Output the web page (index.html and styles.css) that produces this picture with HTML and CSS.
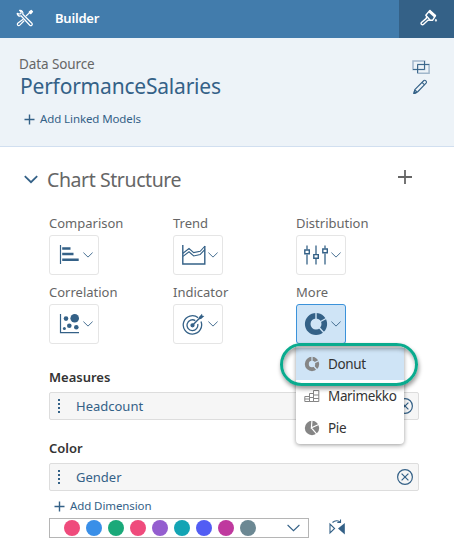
FILE: index.html
```html
<!DOCTYPE html>
<html lang="en">
<head>
<meta charset="utf-8">
<title>Builder</title>
<link rel="stylesheet" href="styles.css">
</head>
<body>
<header class="bar">
  <svg class="tools" width="18" height="18" viewBox="0 0 18 18" fill="none" stroke="#fff" stroke-width="1.25" stroke-linejoin="round"><path d="M1.2 4.4c.1 2 2 3.2 3.8 2.4l8.8 9.4c1.4 1.2 3.3-.5 2.1-2L6.8 5.3C7.5 3 5.8 1 3.6 1.3l1.6 1.8-.4 1.5-1.5.4z"/><path d="M7.2 10.2 2 14.1c-1.6 1.3.2 3.5 1.8 2l4.3-4.4M10 7l4.2-3.9"/><path d="m13.2 3.1 2-1.7 1.3 1.3-1.7 2z" fill="#fff"/></svg>
  <span class="title">Builder</span>
  <div class="tab"><svg width="18" height="18" viewBox="0 0 18 18" fill="none" stroke="#fff" stroke-width="1.4" stroke-linejoin="round"><path d="M5.8 6.2 9.9 1.4l5.6 5.2-2.8 4.6H10.2z"/><path d="m9.3 2.2 5.9 5.3" stroke-width="2.6"/><path d="m6.6 7.4-.3 2-4.6 3.9c-1.5 1.4.4 3.5 1.9 2l4.3-4 2.3-.2"/><path d="M15.9 10.2c2 2.8-1.8 2.8 0 0z" fill="#fff" stroke-width=".8"/></svg></div>
</header>
<section class="source">
  <div class="source-text">
    <div class="label ds"><span>Data Source</span></div>
    <div class="model">PerformanceSalaries</div>
    <div class="add add-model"><svg width="11" height="11" viewBox="0 0 11 11"><path d="M5.5.5v10M.5 5.5h10"/></svg><span>Add Linked Models</span></div>
  </div>
  <div class="source-icons">
    <svg width="18" height="14" viewBox="0 0 18 14" fill="none" stroke="#346187"><path d="M1 .9h11.6v8.6H1zM5.8 4.5h11.3v8.7H5.8z" stroke="#a1b7cb" stroke-width="1.5"/><path d="M1 9.5h11.5V1M5.5 13V4.5h11.7" stroke-width=".9"/></svg>
    <svg class="pencil" width="16" height="16" viewBox="0 0 16 16" fill="none" stroke="#346187" stroke-width="1.1" stroke-linejoin="round"><path d="m1.9 14.5.9-3.8L11.9 1.5q1-.6 2 .4t.4 2L5.5 13z"/><path d="m10 3.3 2.6 2.6M2.9 10.8l2.4 2.3"/><path d="m1.9 14.5.5-2.3 1.7 1.7z" fill="#346187"/></svg>
  </div>
</section>
<main>
  <div class="head">
    <svg class="chev" width="14" height="9" viewBox="0 0 14 9"><path d="m.8 1.2 6.2 6 6.2-6"/></svg>
    <h1>Chart Structure</h1>
    <svg class="plus" width="14" height="14" viewBox="0 0 14 14"><path d="M7 0v14M0 7h14"/></svg>
  </div>
  <div class="types">
    <div class="type"><div class="label">Comparison</div><div class="button">
      <svg width="22" height="22" viewBox="0 0 22 22" stroke="#346187" fill="none"><path d="M2.5 1v19" stroke-width="1.2"/><path d="M4.2 4.5h8.3M4.2 10h11.3M4.2 15.8h16.5" stroke-width="2.4"/></svg>
      <svg class="arrow" width="10" height="6" viewBox="0 0 10 6"><path d="m.4.6 4.6 4.5L9.6.6"/></svg></div></div>
    <div class="type"><div class="label">Trend</div><div class="button wide">
      <svg width="24" height="20" viewBox="0 0 24 20" stroke="#346187" fill="none"><path d="M.8 0v19h22V1" stroke-width="1.4"/><path d="m1 8.2 6-4.7 4.7 4.1 6.5-1.3L23 1M1 11.4l6-4.6 4.7 4.2 6.5-1.5L23 4.4" stroke-width="1.1"/></svg>
      <svg class="arrow" width="10" height="6" viewBox="0 0 10 6"><path d="m.4.6 4.6 4.5L9.6.6"/></svg></div></div>
    <div class="type"><div class="label">Distribution</div><div class="button wide shifted">
      <svg width="24" height="20" viewBox="0 0 24 20" stroke="#346187" fill="none" stroke-width="1.3"><path d="M3 .5v4M3 9.5v10M12 .5v8.7M12 14v5.5M21 .5v3M21 8.6v11" stroke="#5d819f" stroke-width="1.6"/><path d="M.8 5h4.5v3.7H.8zM9.8 9.6h4.5v3.6H9.8zM18.8 4h4.5v3.7h-4.5z" stroke-width="1.4"/></svg>
      <svg class="arrow" width="10" height="6" viewBox="0 0 10 6"><path d="m.4.6 4.6 4.5L9.6.6"/></svg></div></div>
    <div class="type"><div class="label">Correlation</div><div class="button">
      <svg width="22" height="22" viewBox="0 0 22 22" fill="#346187"><path d="M2.5 1v18.6h18.5" fill="none" stroke="#346187" stroke-width="1.2"/><circle cx="8" cy="5.6" r="2.3"/><circle cx="16.7" cy="5.2" r="4.3"/><circle cx="11.3" cy="12.8" r="2.3"/><circle cx="18.3" cy="14.3" r="2.3"/><circle cx="6.4" cy="15.6" r="1.5"/></svg>
      <svg class="arrow" width="10" height="6" viewBox="0 0 10 6"><path d="m.4.6 4.6 4.5L9.6.6"/></svg></div></div>
    <div class="type"><div class="label">Indicator</div><div class="button wide">
      <svg width="24" height="24" viewBox="0 0 24 24" fill="none" stroke="#346187" stroke-width="1.3"><path d="M16.2 5.7A9.2 9.2 0 1 0 19 9.5M13.3 8.6A5.4 5.4 0 1 0 15.7 12"/><path d="m10.5 13.3 8-8" stroke-width="1.5"/><circle cx="10.5" cy="13.3" r="1.5" fill="#346187"/><path d="m17 5.1 3-3.3.4 1.9 2 .3-3.3 3-2.1.2z" fill="#346187" stroke="none"/></svg>
      <svg class="arrow" width="10" height="6" viewBox="0 0 10 6"><path d="m.4.6 4.6 4.5L9.6.6"/></svg></div></div>
    <div class="type"><div class="label">More</div><div class="button wide shifted selected">
      <svg width="24" height="24" viewBox="0 0 24 24"><circle cx="12" cy="12" r="8.3" fill="none" stroke="#346187" stroke-width="5.6"/><path d="M12 12V0M12 12l11-6M12 12l9 10" stroke="#cfe4f6" stroke-width="1.4"/></svg>
      <svg class="arrow" width="10" height="6" viewBox="0 0 10 6"><path d="m.4.6 4.6 4.5L9.6.6"/></svg></div>
      <div class="menu">
        <div class="item active"><svg width="16" height="16" viewBox="0 0 16 16"><circle cx="8" cy="8" r="5.2" fill="none" stroke="#858585" stroke-width="4"/><path d="M8 8V0M8 8l8-4M8 8l6 7" stroke="#cfe4f6" stroke-width="1.2"/></svg><span>Donut</span></div>
        <div class="item"><svg width="16" height="16" viewBox="0 0 16 16" fill="none" stroke="#858585"><path d="M.8 8.5h4.7v5H.8zM.8 11h4.7M5.5 5.5h4v8h-4zM5.5 9.5h4M9.5 2.5h5.3v11H9.5zM9.5 7h5.3M9.5 10.5h5.3"/></svg><span>Marimekko</span></div>
        <div class="item"><svg width="16" height="16" viewBox="0 0 16 16"><circle cx="8" cy="8" r="7.2" fill="#858585"/><path d="m8 0-.6 7.8L15.8 4M7.4 7.8l5.8 6.8" fill="none" stroke="#fff" stroke-width="1.2"/></svg><span>Pie</span></div>
      </div>
      <div class="ring"></div>
    </div>
  </div>
  <h2 class="measures">Measures</h2>
  <div class="field"><svg width="4" height="16" viewBox="0 0 4 16"><path d="M2 1v15" stroke="#346187" stroke-width="2" stroke-dasharray="2"/></svg><span>Headcount</span>
    <svg class="close" width="16" height="16" viewBox="0 0 16 16"><circle cx="8" cy="8" r="7.4"/><path d="m4.6 4.6 6.8 6.8m0-6.8-6.8 6.8"/></svg></div>
  <h2 class="color">Color</h2>
  <div class="field"><svg width="4" height="16" viewBox="0 0 4 16"><path d="M2 1v15" stroke="#346187" stroke-width="2" stroke-dasharray="2"/></svg><span>Gender</span>
    <svg class="close" width="16" height="16" viewBox="0 0 16 16"><circle cx="8" cy="8" r="7.4"/><path d="m4.6 4.6 6.8 6.8m0-6.8-6.8 6.8"/></svg></div>
  <div class="add add-dim"><svg width="11" height="11" viewBox="0 0 11 11"><path d="M5.5.5v10M.5 5.5h10"/></svg><span>Add Dimension</span></div>
  <div class="palette-row">
    <div class="palette">
      <i class="dot pink"></i><i class="dot blue"></i><i class="dot green"></i><i class="dot pink"></i><i class="dot purple"></i><i class="dot teal"></i><i class="dot indigo"></i><i class="dot magenta"></i><i class="dot slate"></i>
      <svg class="drop" width="13" height="8" viewBox="0 0 13 8"><path d="m.6 1 5.9 5.7L12.4 1"/></svg>
    </div>
    <svg class="flip" width="16" height="16" viewBox="0 0 16 16" fill="none" stroke="#346187" stroke-width="1.1"><path d="M1 5v9l4.6-4.5z"/><path d="M15.8 4v11.4L9 9.6z" fill="#346187" stroke="none"/><path d="M3.5 3.5Q7 .3 11 3M11.5.5v3H8.3"/></svg>
  </div>
</main>
</body>
</html>
```
FILE: styles.css
```css
* { box-sizing: border-box; }
body { margin: 0; width: 454px; height: 552px; overflow: hidden; background: #fff; color: #666; font-family: "Noto Sans", "Open Sans", sans-serif; font-size: 13px; }
svg { display: block; flex: none; }
span, h1, h2, .label, .model { white-space: nowrap; }
h1, h2 { margin: 0; }
.bar { height: 38px; display: flex; align-items: center; padding-left: 16px; background: #427cac; color: #fff; }
.title { margin-left: 21px; font-size: 13px; font-weight: 600; line-height: 18px; padding-bottom: 3px; letter-spacing: -.2px; }
.tools { margin-bottom: 2px; }
.tab { margin-left: auto; width: 55px; height: 38px; padding: 9px 0 0 21px; background: #346187; }
.source { height: 109px; display: flex; justify-content: space-between; background: #edf3f8; border-bottom: 1px solid #d1dff0; padding: 16px 24px 0 19px; }
.ds { height: 20px; line-height: 20px; font-size: 13.5px; letter-spacing: -.1px; }
.model { margin: -1px 0 0 1px; height: 28px; line-height: 27px; font-size: 21px; letter-spacing: -.2px; color: #346187; }
.source-icons { padding-top: 6px; }
.pencil { margin-top: 5px; }
.add { display: flex; align-items: center; gap: 5px; font-size: 11.5px; line-height: 16px; height: 16px; color: #346187; letter-spacing: -.1px; }
.add svg { fill: none; stroke: #346187; stroke-width: 1.4; }
.add-model { margin: 10px 0 0 5px; }
.head { display: flex; align-items: center; height: 28px; margin-top: 18px; padding: 0 42px 0 24px; }
.chev { fill: none; stroke: #346187; stroke-width: 1.8; }
.head h1 { margin-left: 9px; padding-top: 1px; font-size: 19.5px; font-weight: 400; line-height: 28px; letter-spacing: -.42px; }
.plus { margin: 0 0 5px auto; stroke: #666; stroke-width: 1.8; }
.types { display: grid; grid-template-columns: 124px 123px 110px; row-gap: 7px; padding-left: 49px; margin-top: 20px; }
.type { position: relative; height: 62px; }
.label { line-height: 20px; }
.type .label { height: 22px; }
.button { width: 50px; height: 40px; display: flex; align-items: center; gap: 3px; padding-left: 8px; border: 1px solid #e5e5e5; border-radius: 3px; background: #fff; }
.button.wide { gap: 2px; }
.button.shifted { padding-left: 7px; gap: 3px; }
.arrow { fill: none; stroke: #346187; stroke-width: .9; }
.selected { background: #cfe4f6; border-color: #3b92da; }
.menu { position: absolute; z-index: 2; left: 0; top: 63px; width: 108px; height: 99px; padding-top: 3px; background: #fff; border-radius: 0 0 4px 4px; box-shadow: 0 1px 4px rgba(0,0,0,.4); color: #333; }
.item { height: 32px; display: flex; align-items: center; gap: 8px; padding-left: 8px; font-size: 13.5px; line-height: 20px; letter-spacing: -.35px; }
.item.active { background: #cfe4f6; }
.ring { position: absolute; z-index: 3; left: -16px; top: 61px; width: 138px; height: 43px; border: 3px solid #0aab8e; border-radius: 22px; box-shadow: 1px 3px 4px rgba(0,0,0,.4), inset 1px 3px 4px rgba(0,0,0,.35); }
h2 { margin-left: 49px; height: 20px; font-size: 13px; line-height: 20px; color: #333; font-weight: 600; }
.measures { margin-top: 23px; }
.field { margin: 5px 35px 0 49px; height: 28px; display: flex; align-items: center; padding: 0 5px 0 7px; background: #f6f6f6; border: 1px solid #ddd; border-radius: 2px; color: #346187; }
.field span { margin-left: 15px; }
.close { margin-left: auto; fill: none; stroke: #346187; stroke-width: 1.2; }
.color { margin-top: 18px; }
.add-dim { margin: 7px 0 0 54px; }
.palette-row { display: flex; margin: 4px 0 0 49px; }
.palette { width: 260px; height: 20px; display: flex; align-items: center; gap: 6px; padding: 0 8px 0 14px; border: 1px solid #b5b5b5; }
.dot { width: 16px; height: 16px; border-radius: 50%; }
.pink { background: #ef4b7c; }
.blue { background: #398fe8; }
.green { background: #1aa979; }
.purple { background: #945ecf; }
.teal { background: #13a4b4; }
.indigo { background: #525df4; }
.magenta { background: #bf399e; }
.slate { background: #6c8893; }
.drop { margin-left: auto; fill: none; stroke: #346187; stroke-width: 1.1; }
.flip { margin: 1px 0 0 20px; }
```
